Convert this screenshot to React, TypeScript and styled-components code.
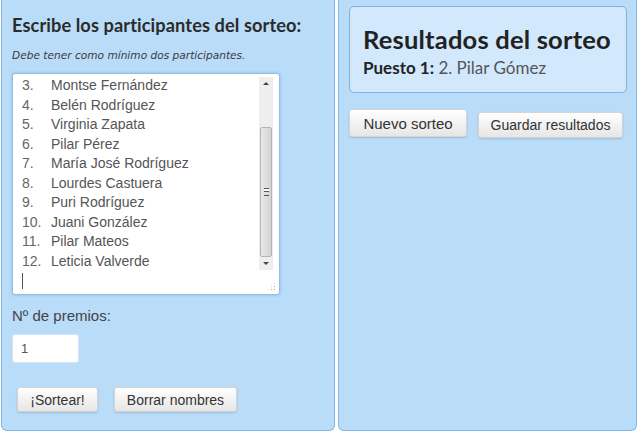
import styled, { createGlobalStyle } from 'styled-components'

const GlobalStyle = createGlobalStyle`
  html, body {
    margin: 0;
    padding: 0;
    background: #ffffff;
  }
  body {
    font-family: 'Liberation Sans', Arial, sans-serif;
  }
`

const participants = [
  'Montse Fernández',
  'Belén Rodríguez',
  'Virginia Zapata',
  'Pilar Pérez',
  'María José Rodríguez',
  'Lourdes Castuera',
  'Puri Rodríguez',
  'Juani González',
  'Pilar Mateos',
  'Leticia Valverde',
]

const Page = styled.div`
  display: flex;
  gap: 3px;
  padding: 0 3px 0 1px;
  height: 431px;
`

const Panel = styled.section<{ $width: number }>`
  box-sizing: border-box;
  width: ${(p) => p.$width}px;
  height: 431px;
  background: #b9dcf9;
  border: 1px solid #82b8e3;
  border-top: none;
  border-radius: 0 0 6px 6px;
  padding: 0 10px;
`

const Heading = styled.h2`
  margin: 13px 0 0;
  font-family: 'Lato', 'DejaVu Sans', sans-serif;
  font-size: 18.2px;
  font-weight: 700;
  color: #2b2b2b;
  letter-spacing: 0.1px;
  line-height: 24px;
`

const Hint = styled.p`
  margin: 12px 0 0;
  font-family: 'DejaVu Sans', sans-serif;
  font-style: italic;
  font-size: 10.6px;
  color: #3a3a3a;
`

const TextBox = styled.div`
  box-sizing: border-box;
  margin-top: 12px;
  width: 268px;
  height: 222px;
  background: #fff;
  border: 1px solid #8fc0e8;
  border-radius: 3px;
  box-shadow: 0 0 3px rgba(80, 150, 210, 0.5);
  position: relative;
  display: flex;
  overflow: hidden;
`

const Lines = styled.ol`
  list-style: none;
  margin: 0;
  padding: 2px 0 0 9px;
  flex: 1;
  font-size: 14px;
  line-height: 19.5px;
  color: #555;
`

const Line = styled.li`
  display: flex;
`

const Num = styled.span`
  width: 29px;
  color: #666;
`

const Caret = styled.li`
  width: 1px;
  height: 16px;
  margin-top: 2px;
  background: #555;
`

const Scrollbar = styled.div`
  width: 14px;
  margin: 3px 6px 24px 0;
  background: #eeeeee;
  display: flex;
  flex-direction: column;
  align-items: center;
`

const Arrow = styled.div<{ $down?: boolean }>`
  height: 14px;
  display: flex;
  align-items: center;
  justify-content: center;
  &::before {
    content: '';
    border-left: 3px solid transparent;
    border-right: 3px solid transparent;
    ${(p) => (p.$down ? 'border-top: 3px solid #444;' : 'border-bottom: 3px solid #444;')}
  }
`

const Track = styled.div`
  flex: 1;
  width: 100%;
  padding-top: 36px;
  box-sizing: border-box;
`

const Thumb = styled.div`
  box-sizing: border-box;
  height: 130px;
  margin: 0 1px;
  border: 1px solid #b5b5b5;
  border-radius: 2px;
  background: linear-gradient(to right, #e8e8e8, #d4d4d4);
  display: flex;
  align-items: center;
  justify-content: center;
  &::before {
    content: '';
    width: 5px;
    height: 6px;
    border-top: 1px solid #555;
    border-bottom: 1px solid #555;
    background: linear-gradient(#fff 0 2px, #555 2px 3px, transparent 3px);
  }
`

const Grip = styled.div`
  position: absolute;
  right: 3px;
  bottom: 3px;
  width: 9px;
  height: 9px;
  background-image: radial-gradient(circle, #aaa 0.8px, transparent 1px);
  background-size: 3px 3px;
  clip-path: polygon(100% 0, 100% 100%, 0 100%);
`

const Label = styled.div`
  margin-top: 12px;
  font-size: 15px;
  color: #444;
`

const NumberInput = styled.div`
  box-sizing: border-box;
  margin-top: 10px;
  width: 67px;
  height: 29px;
  padding: 6px 8px;
  background: #fff;
  border: 1px solid #d3e6f5;
  border-radius: 3px;
  font-size: 13px;
  color: #555;
`

const ButtonRow = styled.div<{ $top: number; $gap: number; $left: number }>`
  display: flex;
  align-items: flex-start;
  margin-top: ${(p) => p.$top}px;
  margin-left: ${(p) => p.$left}px;
  gap: ${(p) => p.$gap}px;
`

const Button = styled.button<{ $w: number; $h: number; $dy?: number; $size: number }>`
  box-sizing: border-box;
  width: ${(p) => p.$w}px;
  height: ${(p) => p.$h}px;
  margin-top: ${(p) => p.$dy ?? 0}px;
  font-family: 'Liberation Sans', Arial, sans-serif;
  font-size: ${(p) => p.$size}px;
  color: #333;
  background: linear-gradient(#ffffff, #e6e6e6);
  border: 1px solid #d4d4d4;
  border-radius: 3px;
  box-shadow: 0 1px 2px rgba(0, 0, 0, 0.15);
  padding: 0;
`

const ResultBox = styled.div`
  box-sizing: border-box;
  margin-top: 6px;
  width: 278px;
  height: 87px;
  background: #d2e8fc;
  border: 1px solid #7fb3e0;
  border-radius: 5px;
  padding: 18px 13px 0;
`

const ResultTitle = styled.h1`
  margin: 0;
  font-family: 'Lato', 'DejaVu Sans', sans-serif;
  font-size: 25.5px;
  font-weight: 700;
  letter-spacing: 0.2px;
  line-height: 28px;
  color: #222;
`

const ResultLine = styled.div`
  margin-top: 4px;
  font-family: 'Lato', 'DejaVu Sans', sans-serif;
  font-size: 17px;
  color: #555;
  b {
    color: #222;
  }
`

export default function App() {
  return (
    <>
      <GlobalStyle />
      <Page>
        <Panel $width={334}>
          <Heading>Escribe los participantes del sorteo:</Heading>
          <Hint>Debe tener como mínimo dos participantes.</Hint>
          <TextBox>
            <Lines>
              {participants.map((name, i) => (
                <Line key={name}>
                  <Num>{i + 3}.</Num>
                  {name}
                </Line>
              ))}
              <Caret />
            </Lines>
            <Scrollbar>
              <Arrow />
              <Track>
                <Thumb />
              </Track>
              <Arrow $down />
            </Scrollbar>
            <Grip />
          </TextBox>
          <Label>Nº de premios:</Label>
          <NumberInput>1</NumberInput>
          <ButtonRow $top={24} $gap={16} $left={5}>
            <Button $w={81} $h={25} $size={14}>¡Sortear!</Button>
            <Button $w={123} $h={25} $size={14}>Borrar nombres</Button>
          </ButtonRow>
        </Panel>
        <Panel $width={299}>
          <ResultBox>
            <ResultTitle>Resultados del sorteo</ResultTitle>
            <ResultLine>
              <b>Puesto 1:</b> 2. Pilar Gómez
            </ResultLine>
          </ResultBox>
          <ButtonRow $top={16} $gap={11} $left={0}>
            <Button $w={118} $h={28} $size={15}>Nuevo sorteo</Button>
            <Button $w={145} $h={26} $dy={3} $size={14}>Guardar resultados</Button>
          </ButtonRow>
        </Panel>
      </Page>
    </>
  )
}
